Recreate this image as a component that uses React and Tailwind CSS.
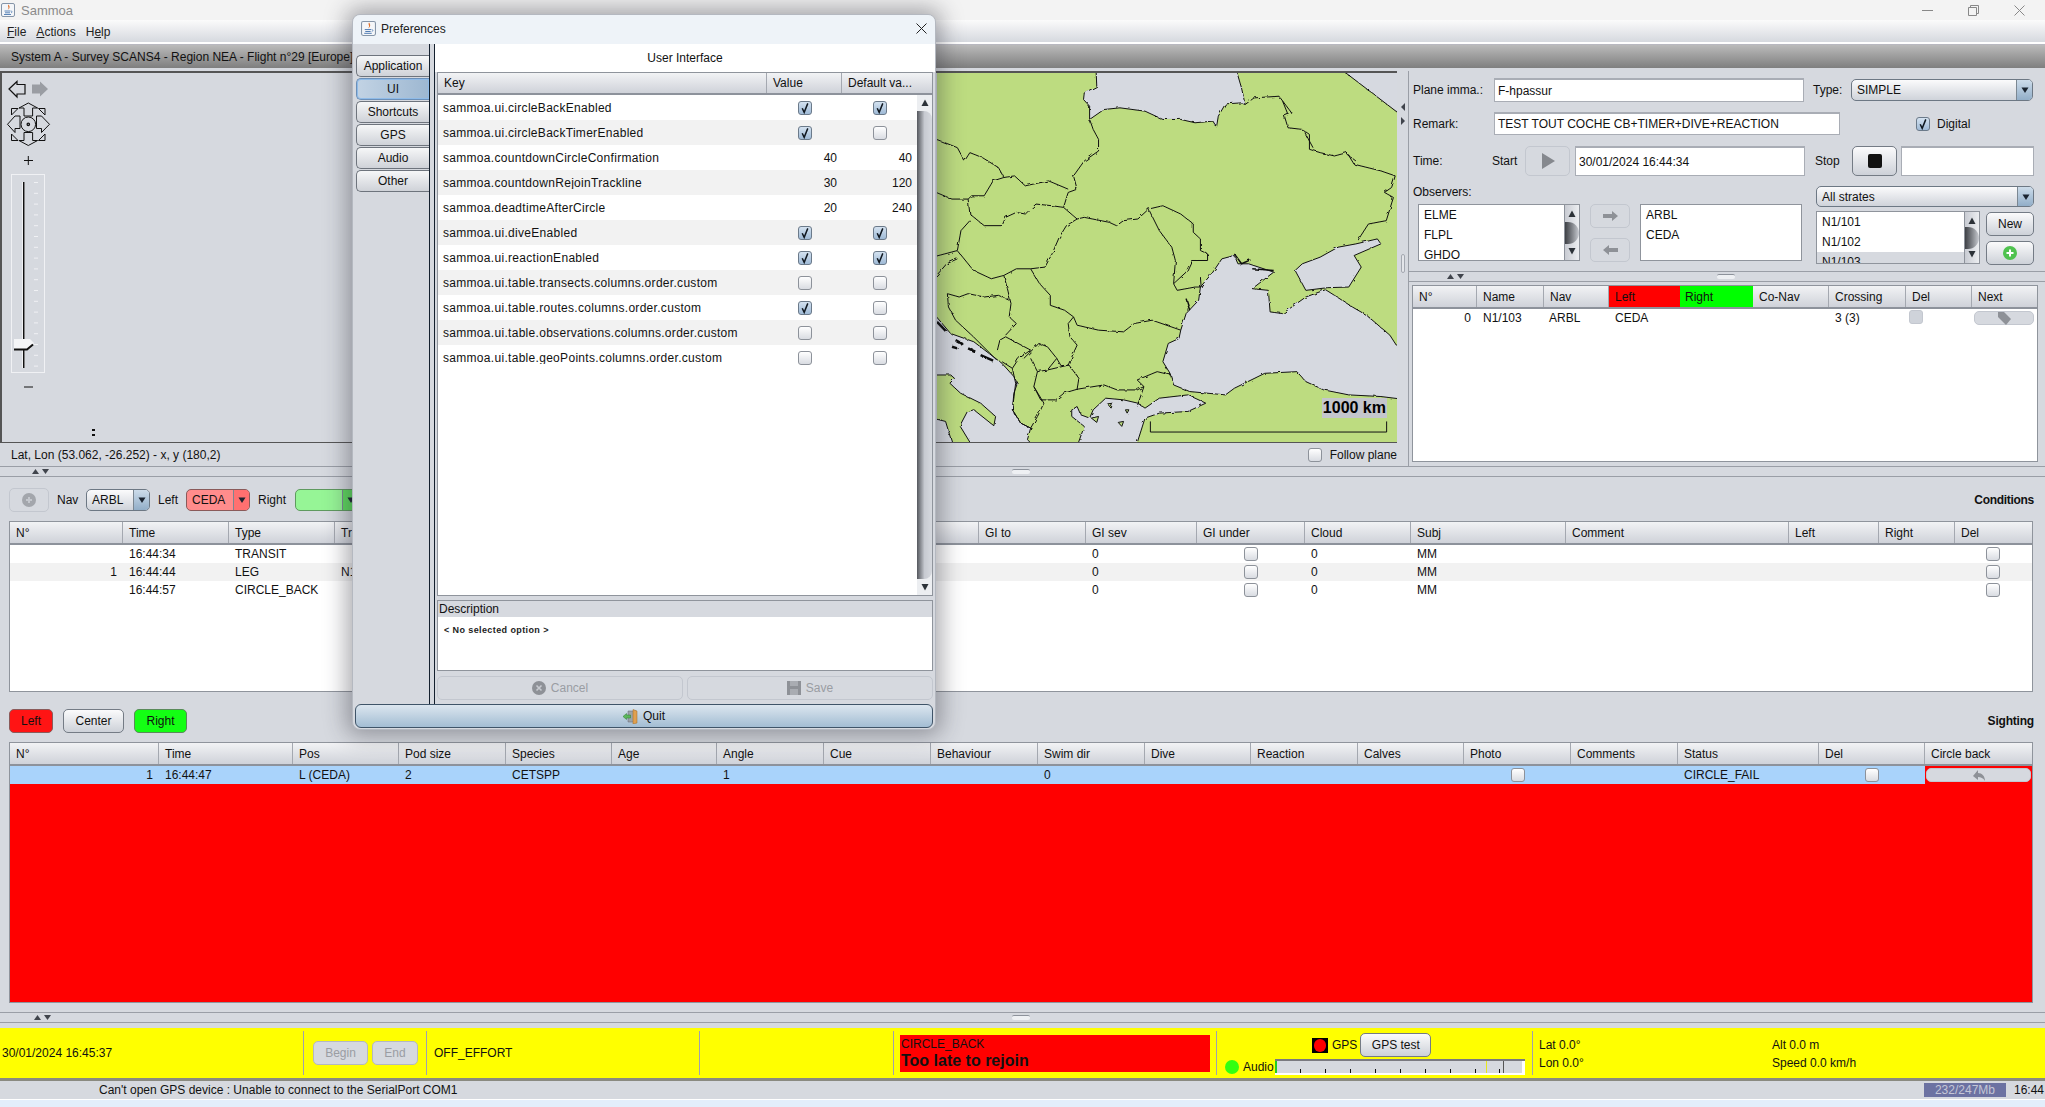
const gridDialog = "grid grid-cols-[329px_75px_75px]";
const gridFlight = "grid grid-cols-[64px_67px_65px_71px_73px_76px_77px_66px_64px]";
const gridObs =
  "grid grid-cols-[113px_106px_106px_107px_107px_107px_107px_107px_109px_107px_111px_108px_106px_155px_223px_90px_76px_76px]";
const gridSight =
  "grid grid-cols-[149px_134px_106px_107px_106px_105px_107px_107px_107px_107px_106px_107px_106px_107px_107px_141px_106px_107px]";

const prefRows = [
  ["sammoa.ui.circleBackEnabled", true, true],
  ["sammoa.ui.circleBackTimerEnabled", true, false],
  ["sammoa.countdownCircleConfirmation", 40, 40],
  ["sammoa.countdownRejoinTrackline", 30, 120],
  ["sammoa.deadtimeAfterCircle", 20, 240],
  ["sammoa.ui.diveEnabled", true, true],
  ["sammoa.ui.reactionEnabled", true, true],
  ["sammoa.ui.table.transects.columns.order.custom", false, false],
  ["sammoa.ui.table.routes.columns.order.custom", true, false],
  ["sammoa.ui.table.observations.columns.order.custom", false, false],
  ["sammoa.ui.table.geoPoints.columns.order.custom", false, false],
];

const obsHeaders = ["N°", "Time", "Type", "Transect", "Route", "Lat", "Lon", "Sea", "Swell", "GI to", "GI sev", "GI under", "Cloud", "Subj", "Comment", "Left", "Right", "Del"];
const sightHeaders = ["N°", "Time", "Pos", "Pod size", "Species", "Age", "Angle", "Cue", "Behaviour", "Swim dir", "Dive", "Reaction", "Calves", "Photo", "Comments", "Status", "Del", "Circle back"];

const JavaIcon = ({ className }) => (
  <svg className={className} viewBox="0 0 14 14">
    <rect x="0.5" y="0.5" width="13" height="13" rx="1.5" fill="#f4f6f9" stroke="#8595a8" />
    <path d="M7.5 1.5C6 3.5 9 4.5 6.5 7C8.5 6 9.5 4 7.5 1.5z" fill="#e0702a" />
    <path d="M3.5 8h6M4 9.8h5M3 11.5h7" stroke="#4a78b0" strokeWidth="0.9" />
    <path d="M10 8c1.5 0 1.5 1.6 0 1.8" stroke="#4a78b0" strokeWidth="0.7" fill="none" />
  </svg>
);

const Check = ({ checked, disabled }) => (
  <span
    className={
      "inline-flex size-[14px] shrink-0 items-center justify-center rounded-[3px] border " +
      (disabled
        ? "border-[#c3c7cf] bg-[#cfd3da]"
        : checked
        ? "border-[#6b7a8a] bg-linear-to-b from-[#d4e2f0] to-[#9fbad6]"
        : "border-[#8d929a] bg-linear-to-b from-white to-[#d9dce2]")
    }
  >
    {checked && (
      <svg className="size-[12px]" viewBox="0 0 12 12">
        <path d="M3.2 6.2 5.2 10.4 8.8 1.4" fill="none" stroke="#101820" strokeWidth="1.5" />
      </svg>
    )}
  </span>
);

const HeadCell = ({ children, last, className = "h-[21px]" }) => (
  <div
    className={
      "flex items-center overflow-hidden whitespace-nowrap pl-[6px] " +
      className +
      (last ? "" : " border-r border-[#a4a8b0]")
    }
  >
    {children}
  </div>
);

const HeadRow = ({ grid, cells, cellClass }) => (
  <div className={grid + " border-b-2 border-[#8d929b] bg-linear-to-b from-[#f2f3f5] to-[#cfd2d9]"}>
    {cells.map((c, i) => (
      <HeadCell key={i} last={i === cells.length - 1} className={cellClass}>
        {c}
      </HeadCell>
    ))}
  </div>
);

const Btn = ({ className = "", children, disabled }) => (
  <div
    className={
      "flex items-center justify-center gap-[5px] rounded-[5px] border " +
      (disabled
        ? "border-[#c3c7cf] bg-[#d6d9df] text-[#9a9da3] "
        : "border-[#747b85] bg-linear-to-b from-[#fbfbfc] to-[#cdd1d8] ") +
      className
    }
  >
    {children}
  </div>
);

const Combo = ({ className = "", text, tint = "blue" }) => {
  const body = {
    blue: "border-[#6d7884] bg-linear-to-b from-[#fbfbfc] to-[#cfd3da]",
    red: "border-[#8a5a5a] bg-[#ff8c8c]",
    green: "border-[#5f9a5f] bg-[#96f596]",
  }[tint];
  const arrow = {
    blue: "bg-linear-to-b from-[#cddcea] to-[#92aec8]",
    red: "bg-[#ff7070]",
    green: "bg-[#5fdc5f]",
  }[tint];
  return (
    <div className={"flex items-stretch overflow-hidden rounded-[5px] border " + body + " " + className}>
      <span className="flex-1 truncate pl-[5px] leading-[20px]">{text}</span>
      <span className={"flex w-[16px] items-center justify-center border-l border-[#7b8792] " + arrow}>
        <svg className="size-[8px]" viewBox="0 0 8 8">
          <path d="M0.5 1.5h7L4 7z" fill="#1b2430" />
        </svg>
      </span>
    </div>
  );
};

const Input = ({ className = "", children }) => (
  <div className={"flex items-center overflow-hidden border border-[#a9adb5] border-t-2 bg-white pl-[3px] whitespace-nowrap " + className}>
    {children}
  </div>
);

const MiniScroll = ({ className = "" }) => (
  <div className={"flex w-[15px] flex-col items-center justify-between bg-linear-to-r from-[#c9ccd3] to-[#eceef1] py-[5px] border-l border-[#8d929b] " + className}>
    <svg className="size-[8px]" viewBox="0 0 8 8"><path d="M0.5 7h7L4 0.5z" fill="#2c3238" /></svg>
    <div className="h-[22px] w-full rounded-r-full bg-linear-to-r from-[#3e4146] to-[#c9ccd2]" />
    <svg className="size-[8px]" viewBox="0 0 8 8"><path d="M0.5 1h7L4 7.5z" fill="#2c3238" /></svg>
  </div>
);

const HSplit = ({ arrowsClass = "pl-[28px]", handleClass = "" }) => (
  <div className="flex h-[11px] items-center border-y border-[#9a9ea6]">
    <div className={"flex w-[60px] gap-[3px] " + arrowsClass}>
      <svg className="h-[5px] w-[7px]" viewBox="0 0 7 5"><path d="M0 5h7L3.5 0z" fill="#40444c" /></svg>
      <svg className="h-[5px] w-[7px]" viewBox="0 0 7 5"><path d="M0 0h7L3.5 5z" fill="#40444c" /></svg>
    </div>
    <div className={"h-[5px] w-[18px] rounded-[2px] border-t border-[#8d929b] bg-[#eef0f3] " + handleClass} />
  </div>
);

// left widget over the map : history arrows, pan wheel and zoom slider
const MapNav = () => (
  <svg className="ml-[4px] mt-[4px] h-[320px] w-[54px] shrink-0" viewBox="0 0 54 320">
    <path d="M3 12 11 4.500v3h8v9.500h-8v3z" fill="none" stroke="#111" strokeWidth="1.200" />
    <path d="M26 7.500h8v-3l8 7.500-8 7.500v-3h-8z" fill="#9a9da3" />
    <g stroke="#111" strokeWidth="1" fill="none">
      <path d="M18 39v-8h-5l9.300-5 9.300 5h-5v8z" />
      <path d="M18 55.500v8h-5l9.300 5 9.300-5h-5v-8z" />
      <path d="M14 43v-4H9l-7.500 8.300L9 55.500v-4h5z" />
      <path d="M30.500 43v-4h5l8 8.300-8 8.200v-4h-5z" />
      <circle cx="22.300" cy="47.300" r="7.300" />
      <circle cx="22.300" cy="47.300" r="1.200" strokeWidth="1.300" />
      <path d="M5.500 38v-6.500h6.500zM39 38v-6.500h-6.500zM5.500 57v6.500H12zM39 57v6.500h-6.500z" />
    </g>
    <path d="M18 83.500h9M22.300 79v9" stroke="#111" strokeWidth="1" />
    <rect x="5.500" y="97.500" width="33" height="198" fill="none" stroke="#f0f1f4" />
    <rect x="16" y="105" width="3" height="186" fill="#f0f1f4" />
    <rect x="17" y="105" width="1.500" height="186" fill="#111" />
    {Array.from({ length: 18 }).map((_, i) => (
      <rect key={i} x="28" y={105 + i * 10.800} width="4" height="1" fill="#f0f1f4" />
    ))}
    <path d="M8 262h16l4 4-4 6H8z" fill="#f4f5f7" />
    <path d="M8 272.500h13l6-5" stroke="#111" strokeWidth="2" fill="none" />
    <path d="M18 310h9" stroke="#111" strokeWidth="1" />
  </svg>
);

// map drawn in the crop's own coordinates, stretched to the panel
const MapDrawing = () => (
  <svg className="h-full w-[460px] shrink-0 bg-[#bddc80]" viewBox="18 65 1287 1112" preserveAspectRatio="none">
    <defs>
      <filter id="rough" x="-5%" y="-5%" width="110%" height="110%">
        <feTurbulence type="fractalNoise" baseFrequency="0.06" numOctaves="2" seed="4" />
        <feDisplacementMap in="SourceGraphic" scale="9" />
      </filter>
    </defs>
    <g filter="url(#rough)">
      <g fill="#d6d9e0" stroke="#111" strokeWidth="1" strokeLinejoin="round">
        <path vectorEffect="non-scaling-stroke" d="M463 55 465 105 430 125 428 145 445 165 445 205 485 175 530 170 600 180 650 205 700 205 740 215 790 210 800 228 805 195 825 158 870 155 880 160 870 110 855 55z" />
        <path vectorEffect="non-scaling-stroke" d="M1150 55 1320 195 1320 55z" />
        <path vectorEffect="non-scaling-stroke" d="M815 625 850 615 860 640 890 640 960 665 900 715 945 720 950 785 985 790 1050 740 1105 718 1130 735 1180 770 1220 795 1285 855 1303 885 1320 885 1320 1048 1260 1040 1170 1035 1100 1020 1050 995 1025 965 935 970 850 1015 825 1035 725 1025 680 1005 670 970 650 935 665 880 695 865 700 840 715 790 750 750 755 710 790 665z" />
        <path vectorEffect="non-scaling-stroke" d="M1020 660 1040 640 1090 620 1140 590 1190 580 1250 565 1260 580 1185 615 1205 650 1170 710 1110 712 1050 720z" />
        <path vectorEffect="non-scaling-stroke" d="M5 785 56 850 121 875 200 940 233 980 243 1000 233 1030 229 1080 252 1120 280 1135 271 1170 290 1190 5 1190z" />
        <path vectorEffect="non-scaling-stroke" fill="#bddc80" d="M5 975 56 975 67 985 54 1000 84 1030 140 1060 182 1100 177 1128 121 1080 103 1085 82 1128 117 1190 63 1190 42 1115 5 1105z" />
        <path vectorEffect="non-scaling-stroke" d="M395 1080 410 1070 420 1095 445 1105 455 1080 490 1045 540 1050 580 1060 600 1075 640 1045 720 1035 770 1060 720 1085 640 1090 600 1105 575 1190 410 1190 430 1130 395 1100z" />
      </g>
      <g fill="#bddc80" stroke="#111" strokeWidth="1">
        <path vectorEffect="non-scaling-stroke" d="M495 1062 510 1060 505 1075z" />
        <path vectorEffect="non-scaling-stroke" d="M545 1080 555 1080 550 1090z" />
        <path vectorEffect="non-scaling-stroke" d="M525 1118 540 1115 535 1130z" />
        <path vectorEffect="non-scaling-stroke" d="M450 1105 470 1100 465 1118z" />
      </g>
      <g fill="none" stroke="#111" strokeWidth="1">
        {[
          "M880 160 905 140 975 135 1010 185 990 195 1000 230 1040 235 1060 250 1060 295 1090 305 1130 315 1165 305 1185 340 1260 360 1300 375 1290 410 1270 425 1295 440 1275 510 1225 520 1195 570",
          "M985 150 1000 190 1012 185M1045 240 1070 290M1165 310 1190 330",
          "M445 205 455 235 470 265 470 300 430 330 400 375 410 415 385 425 372 470",
          "M5 260 75 290 95 330 110 305 145 320 190 350 205 380 235 375 265 405 330 390 385 415",
          "M5 420 60 445 105 445 115 435 150 435 175 390 205 380",
          "M105 445 110 490 150 525 200 525 210 500 240 485 265 490 295 460 340 465 372 470 410 505",
          "M410 505 380 525 360 560 340 610 320 650 280 655",
          "M410 505 430 500 500 515 520 525 540 510 580 505 610 475 650 465 700 490 735 520 735 545 755 565 755 600 775 610 775 630 730 630 715 665 680 700 690 720 740 710 757 710 755 680",
          "M610 475 640 540 675 590 685 630 680 700",
          "M400 800 410 825 470 840 540 845 570 820 620 810 700 840",
          "M280 655 305 700 335 735 335 765 375 780 400 800 385 820 390 860 410 885 385 945",
          "M75 600 120 660 170 685 205 675 240 655 280 655",
          "M205 675 215 715 225 760 220 800 240 820 210 855",
          "M5 620 75 600 85 540 110 510",
          "M5 690 45 640 75 625",
          "M47 730 50 770 70 810 120 860 185 930",
          "M47 730 80 740 105 730 150 740 190 735 220 750",
          "M187 900 194 870 210 860 280 900 247 925 229 955 200 935",
          "M261 925 303 880 327 890 353 925 327 960 299 965 280 925",
          "M353 925 365 947 387 945",
          "M299 965 289 1010 308 1050 350 1050 373 1030 410 1018 415 985 387 945 327 960",
          "M229 955 238 1000 229 1080 252 1120 280 1135 299 1100 317 1060 289 1010",
          "M410 1018 485 1005 522 1020 578 1020 597 1010 578 990 634 965 672 975",
          "M597 1010 578 1070",
        ].map((d, i) => (
          <path key={i} d={d} vectorEffect="non-scaling-stroke" />
        ))}
        <path d="M18 815 45 845M70 870 95 885M105 895 125 905M140 915 175 932M60 890 75 895" strokeWidth="2.500" vectorEffect="non-scaling-stroke" />
        <path d="M850 610 870 640 895 628M900 655 960 660M715 745 725 780" strokeWidth="1.500" vectorEffect="non-scaling-stroke" />
      </g>
    </g>
    <path d="M615 1115V1147H1276V1115" fill="none" stroke="#111" strokeWidth="1" vectorEffect="non-scaling-stroke" />
  </svg>
);

const PrefDialog = () => (
  <div className="absolute left-[352px] top-[14px] flex h-[716px] w-[584px] flex-col overflow-hidden rounded-[8px] border border-[#b4b8c0] bg-[#d6d9df] shadow-[0_0_22px_6px_rgba(40,40,50,0.38)]">
    <div className="flex h-[29px] shrink-0 items-center bg-[#eef3f8] pb-[2px] pl-[8px] pr-[8px]">
      <JavaIcon className="size-[15px]" />
      <span className="ml-[5px] text-[#222]">Preferences</span>
      <svg className="ml-auto size-[11px]" viewBox="0 0 11 11">
        <path d="M0.5 0.5 10.500 10.500M10.500 0.500 0.500 10.500" stroke="#222" strokeWidth="1" />
      </svg>
    </div>

    <div className="flex h-[660px] shrink-0">
      <div className="w-[76px] shrink-0 pl-[3px] pt-[11px]">
        {["Application", "UI", "Shortcuts", "GPS", "Audio", "Other"].map((t) => (
          <div
            key={t}
            className={
              "mb-px flex h-[22px] items-center justify-center rounded-l-[5px] border border-r-0 " +
              (t === "UI"
                ? "border-[#6b8fb8] bg-linear-to-r from-[#c2d3e4] to-[#9db7d1] shadow-[inset_0_0_0_1px_#8fbbe8]"
                : "border-[#6e747d] bg-linear-to-b from-[#f6f7f8] to-[#cfd2d8]")
            }
          >
            {t}
          </div>
        ))}
      </div>
      <div className="w-[6px] shrink-0 border-x border-[#14202e] bg-[#d6d9df]" />

      <div className="flex min-w-0 flex-1 flex-col">
        <div className="flex h-[28px] shrink-0 items-center justify-center bg-white">User Interface</div>
        <div className="mx-[2px] flex h-[524px] shrink-0 flex-col border border-[#8f949c] bg-white">
          <div className="flex">
            <div className="w-[479px] shrink-0">
              <HeadRow grid={gridDialog} cells={["Key", "Value", "Default va..."]} cellClass="h-[20px]" />
            </div>
            <div className="flex-1 border-b-2 border-[#8d929b] bg-linear-to-b from-[#f2f3f5] to-[#cfd2d9]" />
          </div>
          <div className="flex min-h-0 flex-1">
            <div className="w-[479px] shrink-0">
              {prefRows.map(([key, v, d], i) => (
                <div key={key} className={gridDialog + " h-[25px] items-center " + (i % 2 ? "bg-[#f2f2f2]" : "bg-white")}>
                  <span className="truncate pl-[5px] tracking-[0.3px]">{key}</span>
                  {[v, d].map((x, j) =>
                    typeof x === "boolean" ? (
                      <span key={j} className="flex justify-center">
                        <Check checked={x} />
                      </span>
                    ) : (
                      <span key={j} className="pr-[5px] text-right">
                        {x}
                      </span>
                    )
                  )}
                </div>
              ))}
            </div>
            <div className="flex flex-1 flex-col items-stretch bg-[#eceef1]">
              <div className="flex h-[16px] items-center justify-center">
                <svg className="size-[8px]" viewBox="0 0 8 8"><path d="M0.500 7h7L4 0.500z" fill="#2c3238" /></svg>
              </div>
              <div className="flex-1 rounded-tr-[8px] rounded-br-[8px] bg-linear-to-r from-[#55585e] via-[#c7cad1] to-[#d6d9df]" />
              <div className="flex h-[16px] items-center justify-center">
                <svg className="size-[8px]" viewBox="0 0 8 8"><path d="M0.500 1h7L4 7.500z" fill="#2c3238" /></svg>
              </div>
            </div>
          </div>
        </div>
        <div className="mx-[2px] mt-[4px] flex h-[71px] shrink-0 flex-col border border-[#8f949c] bg-white">
          <div className="flex h-[16px] items-center bg-[#d6d9df] pl-px">Description</div>
          <div className="pl-[6px] pt-[9px] text-[9px] font-bold tracking-[0.4px] text-[#222]">&lt; No selected option &gt;</div>
        </div>
        <div className="mx-[2px] mt-[5px] flex gap-[4px]">
          <Btn disabled className="h-[24px] flex-1">
            <svg className="size-[14px]" viewBox="0 0 14 14">
              <circle cx="7" cy="7" r="7" fill="#8e9197" />
              <path d="M4.500 4.500 9.500 9.500M9.500 4.500 4.500 9.500" stroke="#c8cbd1" strokeWidth="1.600" />
            </svg>
            Cancel
          </Btn>
          <Btn disabled className="h-[24px] flex-1">
            <svg className="size-[14px]" viewBox="0 0 14 14">
              <path d="M0 0h14v14H0z" fill="#8e9197" />
              <path d="M3 0h8v5H3zM3 8h8v6H3z" fill="#a9acb2" />
            </svg>
            Save
          </Btn>
        </div>
      </div>
    </div>

    <Btn className="mx-[2px] h-[24px] shrink-0 !rounded-[6px] !border-[#3f5468] !from-[#dce6ef] !to-[#a3bdd3] text-[#111]">
      <svg className="size-[15px]" viewBox="0 0 15 15">
        <path d="M5 2h8v11H5z" fill="#9aa3a8" stroke="#667" strokeWidth="0.500" />
        <path d="M10 0.500 14 2v12l-4 1z" fill="#e0a050" stroke="#a06a20" strokeWidth="0.500" />
        <path d="M0 7.500 3.500 4.500v1.500H7.500v3H3.500v1.500z" fill="#5cb85c" stroke="#2c7a2c" strokeWidth="0.500" />
      </svg>
      Quit
    </Btn>
  </div>
);

const PlaneForm = () => (
  <div className="flex h-[396px] w-[637px] shrink-0 flex-col border-l border-[#9a9ea6]">
    <div className="mt-[7px] flex h-[24px] items-center pl-[3px]">
      <span className="w-[82px] shrink-0 pl-px">Plane imma.:</span>
      <Input className="h-[24px] w-[310px]">F-hpassur</Input>
      <span className="ml-[9px] w-[38px]">Type:</span>
      <Combo className="h-[22px] w-[182px]" text="SIMPLE" />
    </div>
    <div className="mt-[10px] flex h-[23px] items-center pl-[3px]">
      <span className="w-[82px] shrink-0 pl-px">Remark:</span>
      <Input className="h-[23px] w-[346px]">TEST TOUT COCHE CB+TIMER+DIVE+REACTION</Input>
      <span className="ml-[76px] flex items-center gap-[7px]">
        <Check checked />
        Digital
      </span>
    </div>
    <div className="mt-[11px] flex h-[30px] items-center pl-[4px]">
      <span className="w-[79px] shrink-0">Time:</span>
      <span className="w-[33px] shrink-0">Start</span>
      <Btn disabled className="h-[30px] w-[45px] shrink-0">
        <svg className="size-[16px]" viewBox="0 0 16 16"><path d="M2 0 15 8 2 16z" fill="#85888e" /></svg>
      </Btn>
      <Input className="ml-[5px] h-[30px] w-[230px] shrink-0">30/01/2024 16:44:34</Input>
      <span className="ml-[10px] w-[37px] shrink-0">Stop</span>
      <Btn className="h-[30px] w-[45px] shrink-0">
        <span className="size-[14px] rounded-[2px] bg-[#111]" />
      </Btn>
      <Input className="ml-[4px] h-[30px] w-[133px] shrink-0" />
    </div>

    <div className="mt-[10px] flex h-[79px] pl-[4px]">
      <div className="w-[403px] shrink-0">
        <div className="h-[18px] leading-[12px]">Observers:</div>
        <div className="flex pl-[5px]">
          <div className="flex h-[57px] w-[162px] border border-[#8f949c] bg-white">
            <div className="flex-1 overflow-hidden pl-[5px] leading-[20px]">
              <div>ELME</div>
              <div>FLPL</div>
              <div>GHDO</div>
            </div>
            <MiniScroll />
          </div>
          <div className="ml-[10px] flex w-[40px] flex-col gap-[10px]">
            <Btn disabled className="h-[24px]">
              <svg className="h-[10px] w-[15px]" viewBox="0 0 15 10"><path d="M0 3h9V0l6 5-6 5V7H0z" fill="#8e9197" /></svg>
            </Btn>
            <Btn disabled className="h-[24px]">
              <svg className="h-[10px] w-[15px]" viewBox="0 0 15 10"><path d="M15 3H6V0L0 5l6 5V7h9z" fill="#8e9197" /></svg>
            </Btn>
          </div>
          <div className="ml-[10px] h-[57px] w-[162px] border border-[#8f949c] bg-white pl-[5px] leading-[20px]">
            <div>ARBL</div>
            <div>CEDA</div>
          </div>
        </div>
      </div>
      <div className="w-[218px] shrink-0">
        <Combo className="h-[21px]" text="All strates" />
        <div className="mt-[4px] flex">
          <div className="flex h-[53px] w-[164px] border border-[#8f949c] bg-white">
            <div className="flex-1 overflow-hidden leading-[20px]">
              <div className="pl-[5px]">N1/101</div>
              <div className="pl-[5px]">N1/102</div>
              <div className="bg-[#d6d9df] pl-[5px]">N1/103</div>
            </div>
            <MiniScroll />
          </div>
          <div className="ml-[6px] flex w-[48px] flex-col gap-[5px] pt-px">
            <Btn className="h-[24px]">New</Btn>
            <Btn className="h-[24px]">
              <svg className="size-[14px]" viewBox="0 0 14 14">
                <circle cx="7" cy="7" r="7" fill="#4fc24f" />
                <path d="M7 3.500v7M3.500 7h7" stroke="#fff" strokeWidth="2" />
              </svg>
            </Btn>
          </div>
        </div>
      </div>
    </div>

    <div className="mt-[6px]">
      <HSplit arrowsClass="pl-[38px]" handleClass="ml-[248px]" />
    </div>
    <div className="ml-[3px] mt-[3px] h-[177px] w-[626px] border border-[#8f949c] bg-white">
      <div className={gridFlight + " border-b-2 border-[#8d929b] bg-linear-to-b from-[#f2f3f5] to-[#cfd2d9]"}>
        <HeadCell>N°</HeadCell>
        <HeadCell>Name</HeadCell>
        <HeadCell>Nav</HeadCell>
        <div className="flex h-[21px] items-center bg-[#ff0000] pl-[6px]">Left</div>
        <div className="flex h-[21px] items-center bg-[#00ff00] pl-[5px]">Right</div>
        <HeadCell>Co-Nav</HeadCell>
        <HeadCell>Crossing</HeadCell>
        <HeadCell>Del</HeadCell>
        <HeadCell last>Next</HeadCell>
      </div>
      <div className={gridFlight + " h-[18px] items-center"}>
        <span className="pr-[6px] text-right">0</span>
        <span className="pl-[6px]">N1/103</span>
        <span className="pl-[5px]">ARBL</span>
        <span className="pl-[6px]">CEDA</span>
        <span />
        <span />
        <span className="pl-[6px]">3 (3)</span>
        <span className="pl-[3px]"><Check disabled /></span>
        <span className="pl-[2px] pr-[2px]">
          <Btn disabled className="h-[14px]">
            <svg className="h-[14px] w-[15px]" viewBox="0 0 15 14"><path d="M1 1h6l7 7-5 6-8-8z" fill="#8e9197" /></svg>
          </Btn>
        </span>
      </div>
    </div>
  </div>
);

export default function App() {
  return (
    <div className="relative flex h-[1107px] w-[2045px] flex-col overflow-hidden bg-[#d6d9df] font-['Liberation_Sans',sans-serif] text-[12px] leading-none text-[#111]">
      {/* window title */}
      <div className="flex h-[20px] shrink-0 items-center bg-[#f3f3f3] pl-px">
        <JavaIcon className="size-[14px]" />
        <span className="ml-[6px] text-[13px] text-[#8a8a8a]">Sammoa</span>
        <div className="ml-auto flex items-center gap-[35px] pr-[20px]">
          <svg className="size-[11px]" viewBox="0 0 11 11"><path d="M0 5.500h11" stroke="#888" /></svg>
          <svg className="size-[11px]" viewBox="0 0 11 11"><path d="M0.500 2.500h8v8h-8zM2.500 2.500v-2h8v8h-2" fill="none" stroke="#888" /></svg>
          <svg className="size-[11px]" viewBox="0 0 11 11"><path d="M0.500 0.500 10.500 10.500M10.500 0.500 0.500 10.500" stroke="#888" /></svg>
        </div>
      </div>

      {/* menu */}
      <div className="flex h-[22px] shrink-0 items-center gap-[10px] bg-linear-to-b from-[#fbfbfb] to-[#d6d9df] pl-[7px] pt-[2px] text-[#222]">
        <span><u>F</u>ile</span>
        <span><u>A</u>ctions</span>
        <span>H<u>e</u>lp</span>
      </div>
      <div className="h-[3px] shrink-0 border-b border-[#b8b8c0] bg-white" />
      <div className="flex h-[23px] shrink-0 items-center bg-linear-to-b from-[#bbbbbb] to-[#7f7f7f] pl-[11px] text-[#111]">
        System A - Survey SCANS4 - Region NEA - Flight n°29 [Europe]
      </div>
      <div className="h-[3px] shrink-0" />

      {/* map + plane form */}
      <div className="flex h-[396px] shrink-0">
        <div className="flex w-[1397px] shrink-0 flex-col">
          <div className="relative flex h-[372px] shrink-0 border-b border-l-2 border-t-2 border-[#555]">
            <MapNav />
            <div className="flex-1" />
            <MapDrawing />
            <div className="absolute bottom-[24px] right-[10px] bg-[#c4c6cc] px-[1px] text-[16px] font-bold leading-[20px] text-black">
              1000 km
            </div>
            <div className="absolute left-[90px] top-[356px] h-[7px] w-[3px] border-y-2 border-[#111]" />
          </div>
          <div className="flex h-[24px] items-center justify-between pl-[11px]">
            <span>Lat, Lon (53.062, -26.252) - x, y (180,2)</span>
            <span className="flex items-center gap-[8px]">
              <Check />
              Follow plane
            </span>
          </div>
        </div>
        <div className="flex w-[11px] shrink-0 flex-col items-center">
          <svg className="mt-[32px] h-[22px] w-[6px]" viewBox="0 0 6 22">
            <path d="M5 0v8L1 4zM1 14v8l4-4z" fill="#40444c" />
          </svg>
          <div className="mt-[129px] h-[19px] w-[4px] rounded-[2px] border border-[#a4a8b0] bg-[#e4e6ea]" />
        </div>
        <PlaneForm />
      </div>

      <div className="-mt-[1px]">
        <HSplit arrowsClass="pl-[32px]" handleClass="ml-[952px]" />
      </div>

      {/* observations */}
      <div className="flex h-[34px] shrink-0 items-center pl-[9px] pr-[11px] pt-[12px]">
        <Btn disabled className="h-[24px] w-[40px]">
          <svg className="size-[14px]" viewBox="0 0 14 14">
            <circle cx="7" cy="7" r="7" fill="#a3a6ac" />
            <path d="M7 4v6M4 7h6" stroke="#c4c7cd" strokeWidth="2" />
          </svg>
        </Btn>
        <span className="ml-[8px] w-[29px]">Nav</span>
        <Combo className="h-[22px] w-[64px]" text="ARBL" />
        <span className="ml-[8px] w-[28px]">Left</span>
        <Combo className="h-[22px] w-[64px]" text="CEDA" tint="red" />
        <span className="ml-[8px] w-[37px]">Right</span>
        <Combo className="h-[22px] w-[64px]" text="" tint="green" />
        <span className="ml-auto font-bold tracking-[-0.3px]">Conditions</span>
      </div>
      <div className="ml-[9px] mr-[12px] mt-[10px] h-[171px] shrink-0 border border-[#8f949c] bg-white">
        <HeadRow grid={gridObs} cells={obsHeaders} />
        {[
          ["", "16:44:34", "TRANSIT", ""],
          ["1", "16:44:44", "LEG", "N1/103"],
          ["", "16:44:57", "CIRCLE_BACK", ""],
        ].map((r, i) => (
          <div key={i} className={gridObs + " h-[18px] items-center " + (i === 1 ? "bg-[#f2f2f2]" : "bg-white")}>
            <span className="pr-[6px] text-right">{r[0]}</span>
            <span className="pl-[6px]">{r[1]}</span>
            <span className="pl-[6px]">{r[2]}</span>
            <span className="pl-[6px]">{r[3]}</span>
            <span /><span /><span /><span /><span /><span />
            <span className="pl-[6px]">0</span>
            <span className="flex justify-center"><Check /></span>
            <span className="pl-[6px]">0</span>
            <span className="pl-[6px]">MM</span>
            <span /><span /><span />
            <span className="flex justify-center"><Check /></span>
          </div>
        ))}
      </div>

      {/* sighting */}
      <div className="mt-[17px] flex h-[24px] shrink-0 items-center pl-[9px] pr-[11px]">
        <div className="flex h-[24px] w-[44px] items-center justify-center rounded-[5px] border border-[#8a5a5a] bg-[#ff1414]">Left</div>
        <Btn className="ml-[10px] h-[24px] w-[61px]">Center</Btn>
        <div className="ml-[10px] flex h-[24px] w-[53px] items-center justify-center rounded-[5px] border border-[#5a8a5a] bg-[#14ff14]">Right</div>
        <span className="ml-auto font-bold tracking-[-0.2px]">Sighting</span>
      </div>
      <div className="ml-[9px] mr-[12px] mt-[9px] h-[261px] shrink-0 border border-[#8f949c] bg-[#ff0000]">
        <HeadRow grid={gridSight} cells={sightHeaders} />
        <div className={gridSight + " h-[18px] items-center bg-[#a9d3fb]"}>
          <span className="pr-[6px] text-right">1</span>
          <span className="pl-[6px]">16:44:47</span>
          <span className="pl-[6px]">L (CEDA)</span>
          <span className="pl-[6px]">2</span>
          <span className="pl-[6px]">CETSPP</span>
          <span />
          <span className="pl-[6px]">1</span>
          <span /><span />
          <span className="pl-[6px]">0</span>
          <span /><span /><span />
          <span className="flex justify-center"><Check /></span>
          <span />
          <span className="pl-[6px]">CIRCLE_FAIL</span>
          <span className="flex justify-center"><Check /></span>
          <span className="h-[18px] bg-[#ff0000] px-[1px] py-[2px]">
            <Btn disabled className="h-[14px]">
              <svg className="h-[11px] w-[14px]" viewBox="0 0 14 11">
                <path d="M1 6 6 0v3c4 0 7 3 7 8-2-3-4-4-7-4v3z" fill="#8e9197" />
              </svg>
            </Btn>
          </span>
        </div>
      </div>

      <div className="mt-[9px]">
        <HSplit arrowsClass="pl-[34px]" handleClass="ml-[952px]" />
      </div>
      <div className="h-[5px] shrink-0" />

      {/* bottom yellow bar */}
      <div className="flex h-[50px] shrink-0 items-stretch bg-[#ffff00] text-[#111]">
        <div className="my-[3px] flex w-[304px] items-center border-r border-[#a0a0b0] pl-[2px]">30/01/2024 16:45:37</div>
        <div className="my-[3px] flex w-[123px] items-center gap-[4px] border-r border-[#a0a0b0] pl-[9px]">
          <Btn disabled className="h-[24px] w-[55px] !border-[#b4b8c0] !text-[#9a9da3]">Begin</Btn>
          <Btn disabled className="h-[24px] w-[46px] !border-[#b4b8c0]">End</Btn>
        </div>
        <div className="my-[3px] flex w-[273px] items-center border-r border-[#a0a0b0] pl-[7px]">OFF_EFFORT</div>
        <div className="my-[3px] flex w-[194px] border-r border-[#a0a0b0]" />
        <div className="my-[3px] flex w-[323px] items-center border-r border-[#a0a0b0] pl-[6px]">
          <div className="flex h-[37px] w-[310px] flex-col justify-center gap-[3px] bg-[#ff0000] pl-px">
            <span>CIRCLE_BACK</span>
            <span className="text-[16px] font-bold">Too late to rejoin</span>
          </div>
        </div>
        <div className="my-[3px] flex w-[316px] flex-col border-r border-[#a0a0b0] pl-[8px]">
          <div className="ml-[87px] flex h-[28px] shrink-0 items-center">
            <span className="flex h-[15px] w-[16px] items-center justify-center bg-black">
              <span className="h-[13px] w-[12px] rounded-full bg-[#ff0000]" />
            </span>
            <span className="ml-[4px]">GPS</span>
            <Btn className="ml-[3px] h-[24px] w-[71px]">GPS test</Btn>
          </div>
          <div className="flex items-center">
            <span className="size-[14px] rounded-full bg-[#33ff11]" />
            <span className="ml-[4px] mr-px">Audio</span>
            <svg className="h-[16px] w-[250px]" viewBox="0 0 250 16">
              <rect width="250" height="16" fill="#fff" />
              <rect y="2" width="247" height="12" fill="#d6d9df" />
              <rect width="250" height="2" fill="#7a7a80" />
              <rect y="2" width="2" height="12" fill="#22cc22" />
              {[25, 50, 75, 100, 125, 150, 175, 200, 224].map((x) => (
                <rect key={x} x={x} y="10" width="1" height="4" fill="#111" />
              ))}
              <rect x="211" y="2" width="1" height="12" fill="#e6e620" />
              <rect x="228" y="2" width="1" height="12" fill="#555" />
            </svg>
          </div>
        </div>
        <div className="my-[3px] grid w-[512px] grid-cols-[233px_1fr] content-center gap-y-[6px] pl-[6px] pt-[2px]">
          <span>Lat 0.0°</span>
          <span>Alt 0.0 m</span>
          <span>Lon 0.0°</span>
          <span>Speed 0.0 km/h</span>
        </div>
      </div>
      <div className="h-[3px] shrink-0 bg-[#8a8a80]" />

      {/* status */}
      <div className="flex h-[18px] shrink-0 items-center pl-[99px]">
        <span>Can't open GPS device : Unable to connect to the SerialPort COM1</span>
        <span className="ml-auto flex h-[14px] w-[82px] items-center justify-center bg-[#6c72a2] text-[#c4c6d6]">232/247Mb</span>
        <span className="ml-[8px] mr-[1px]">16:44</span>
      </div>
      <div className="h-px shrink-0 bg-white" />
      <div className="flex-1 bg-[#e3eefb]" />

      <PrefDialog />
    </div>
  );
}
